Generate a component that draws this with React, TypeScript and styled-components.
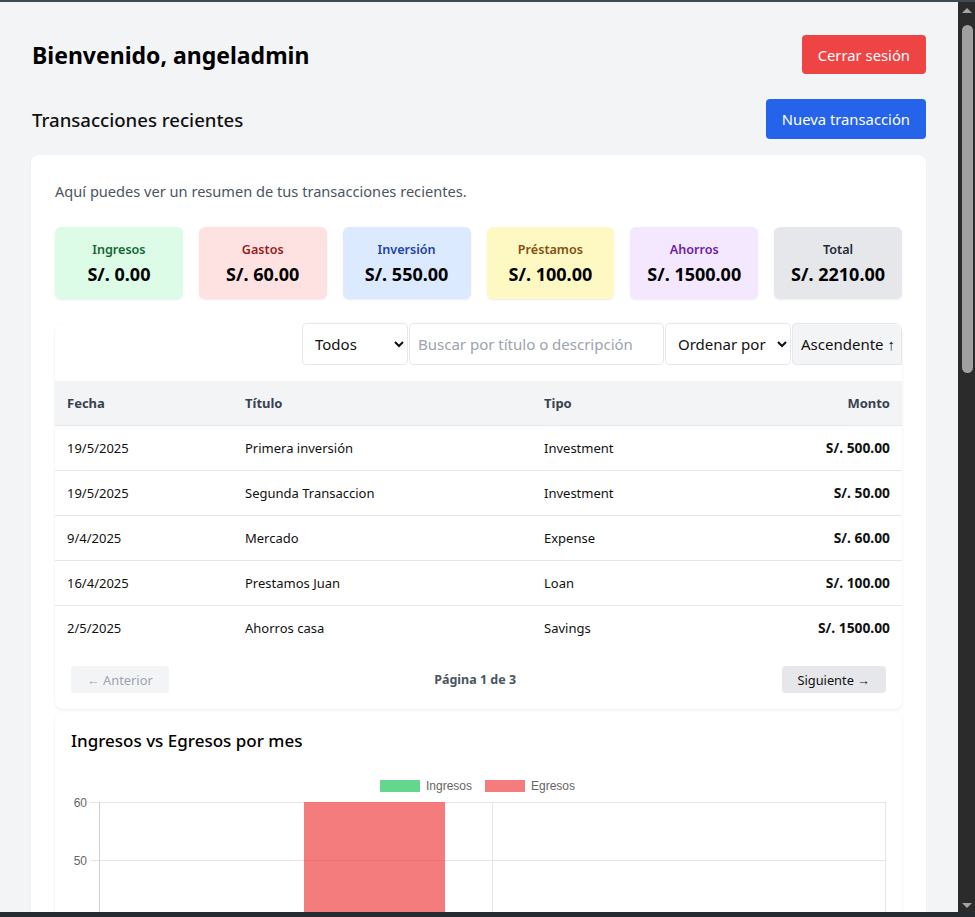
import React from 'react';
import styled, { createGlobalStyle } from 'styled-components';

const GlobalStyle = createGlobalStyle`
  body {
    margin: 0;
    background: #f3f4f6;
    font-family: "Noto Sans", "Open Sans", sans-serif;
    color: #111827;
  }
  * {
    box-sizing: border-box;
  }
`;

// window frame: the page viewport plus the browser's dark scrollbar
const Frame = styled.div`
  display: flex;
  flex-direction: column;
  height: 100vh;
  border-top: 2px solid #3c4a55;
  border-bottom: 5px solid #262a31;
`;

const Viewport = styled.div`
  display: flex;
  flex: 1;
  min-height: 0;
`;

const Main = styled.main`
  flex: 1;
  min-width: 0;
  overflow: hidden;
`;

const ScrollBar = styled.div`
  display: flex;
  flex-direction: column;
  align-items: center;
  width: 17px;
  background: #2b2b2b;
  padding: 6px 0 4px;
`;

const Arrow = styled.div<{ $down?: boolean }>`
  width: 0;
  height: 0;
  border-left: 5px solid transparent;
  border-right: 5px solid transparent;
  ${props =>
    props.$down
      ? 'border-top: 5px solid #a3a3a3; margin-top: auto;'
      : 'border-bottom: 5px solid #a3a3a3;'}
`;

const Thumb = styled.div`
  width: 11px;
  height: 348px;
  margin: 12px 0 0 2px;
  border-radius: 6px;
  background: #a0a0a0;
`;

const Page = styled.div`
  padding: 33px 32px 32px 31px;
`;

const HeaderRow = styled.div<{ $gap: number }>`
  display: flex;
  justify-content: space-between;
  align-items: center;
  margin-bottom: ${props => props.$gap}px;
  padding-left: 1px;
`;

const Title = styled.h1`
  margin: 0;
  font-size: 23px;
  font-weight: 700;
  color: #000;
`;

const Subtitle = styled.h2`
  margin: 0;
  font-size: 18.6px;
  font-weight: 500;
  color: #111;
`;

const ActionButton = styled.button<{ $color: string; $h: number }>`
  height: ${props => props.$h}px;
  padding: 0 16px;
  border: none;
  border-radius: 4px;
  background: ${props => props.$color};
  color: #fff;
  font-family: inherit;
  font-size: 14.8px;
  cursor: pointer;
`;

const Card = styled.div`
  background: #fff;
  border-radius: 8px;
  padding: 24px;
  box-shadow: 0 1px 2px rgba(0, 0, 0, 0.05);
`;

const Description = styled.p`
  margin: 0 0 24px;
  font-size: 14.6px;
  line-height: 24px;
  color: #4b5563;
`;

const SummaryGrid = styled.div`
  display: grid;
  grid-template-columns: repeat(6, 1fr);
  gap: 16px;
  margin-bottom: 24px;
`;

const SummaryBox = styled.div<{ $bg: string }>`
  background: ${props => props.$bg};
  border-radius: 6px;
  padding: 13px 8px 11px;
  text-align: center;
  box-shadow: 0 1px 2px rgba(0, 0, 0, 0.08);
`;

const SummaryLabel = styled.div<{ $color: string }>`
  font-size: 12.6px;
  line-height: 20px;
  font-weight: 600;
  color: ${props => props.$color};
`;

const SummaryValue = styled.div`
  font-size: 18px;
  line-height: 28px;
  font-weight: 700;
  color: #000;
`;

const TableCard = styled.div`
  background: #fff;
  border-radius: 8px;
  box-shadow: 0 1px 3px rgba(0, 0, 0, 0.08);
  overflow: hidden;
`;

const FilterRow = styled.div`
  display: flex;
  justify-content: flex-end;
  height: 42px;
  margin-bottom: 16px;
`;

const FilterSelect = styled.select<{ $w: number }>`
  width: ${props => props.$w}px;
  height: 42px;
  padding: 0 8px;
  border: 1px solid #e5e7eb;
  border-radius: 4px;
  background: #fff;
  font-family: inherit;
  font-size: 15px;
  color: #111;
`;

const SearchInput = styled.input`
  width: 255px;
  height: 42px;
  margin: 0 1px;
  padding: 0 8px;
  border: 1px solid #e5e7eb;
  border-radius: 4px;
  font-family: inherit;
  font-size: 15px;
  &::placeholder {
    color: #9ca3af;
  }
`;

const SortButton = styled.button`
  width: 110px;
  height: 42px;
  margin-left: 1px;
  padding: 0 8px;
  border: 1px solid #e5e7eb;
  border-radius: 4px 0 0 4px;
  background: #f3f4f6;
  font-family: inherit;
  font-size: 15px;
  color: #111;
  white-space: nowrap;
  overflow: hidden;
  text-align: left;
`;

const Table = styled.table`
  width: 100%;
  border-collapse: collapse;
  font-size: 13px;
`;

const Th = styled.th<{ $right?: boolean; $w?: number }>`
  height: 44px;
  padding: 0 12px;
  background: #f3f4f6;
  text-align: ${props => (props.$right ? 'right' : 'left')};
  width: ${props => (props.$w ? `${props.$w}px` : 'auto')};
  font-weight: 700;
  color: #374151;
`;

const Td = styled.td<{ $right?: boolean; $bold?: boolean }>`
  height: 45px;
  padding: 0 12px;
  border-top: 1px solid #e5e7eb;
  text-align: ${props => (props.$right ? 'right' : 'left')};
  font-weight: ${props => (props.$bold ? 700 : 400)};
  font-size: ${props => (props.$bold ? 13.8 : 13)}px;
  color: #111;
`;

const Pagination = styled.div`
  display: flex;
  justify-content: space-between;
  align-items: center;
  padding: 16px;
`;

const PageButton = styled.button<{ $disabled?: boolean }>`
  height: 27px;
  padding: 0 16px;
  border: none;
  border-radius: 4px;
  background: ${props => (props.$disabled ? '#f3f4f6' : '#e5e7eb')};
  color: ${props => (props.$disabled ? '#9ca3af' : '#111')};
  font-family: inherit;
  font-size: 12.8px;
`;

const PageInfo = styled.span`
  font-size: 12.5px;
  font-weight: 700;
  color: #4b5563;
`;

const ChartCard = styled.div`
  margin-top: 3px;
  background: #fff;
  border-radius: 8px;
  box-shadow: 0 1px 3px rgba(0, 0, 0, 0.08);
  padding: 16px;
`;

const ChartTitle = styled.h3`
  margin: 0 0 13px;
  font-size: 17px;
  line-height: 26px;
  font-weight: 500;
  color: #000;
`;

const ChartSvg = styled.svg`
  display: block;
  width: 100%;
  height: 420px;
  font-family: "Liberation Sans", Arial, sans-serif;
`;

const summary = [
  { label: 'Ingresos', value: 'S/. 0.00', bg: '#dcfce7', color: '#166534' },
  { label: 'Gastos', value: 'S/. 60.00', bg: '#fee2e2', color: '#991b1b' },
  { label: 'Inversión', value: 'S/. 550.00', bg: '#dbeafe', color: '#1e40af' },
  { label: 'Préstamos', value: 'S/. 100.00', bg: '#fef9c3', color: '#854d0e' },
  { label: 'Ahorros', value: 'S/. 1500.00', bg: '#f3e8ff', color: '#6b21a8' },
  { label: 'Total', value: 'S/. 2210.00', bg: '#e5e7eb', color: '#1f2937' },
];

const rows = [
  { date: '19/5/2025', title: 'Primera inversión', type: 'Investment', amount: 'S/. 500.00' },
  { date: '19/5/2025', title: 'Segunda Transaccion', type: 'Investment', amount: 'S/. 50.00' },
  { date: '9/4/2025', title: 'Mercado', type: 'Expense', amount: 'S/. 60.00' },
  { date: '16/4/2025', title: 'Prestamos Juan', type: 'Loan', amount: 'S/. 100.00' },
  { date: '2/5/2025', title: 'Ahorros casa', type: 'Savings', amount: 'S/. 1500.00' },
];

const ticks = [60, 50, 40, 30, 20, 10, 0];

const IncomeChart: React.FC = () => (
  <ChartSvg viewBox="0 0 815 420" preserveAspectRatio="xMinYMin meet">
    <rect x="309" y="13" width="40" height="12" fill="rgba(34,197,94,0.7)" />
    <text x="355" y="23" fontSize="12" fill="#666">Ingresos</text>
    <rect x="414" y="13" width="40" height="12" fill="rgba(239,68,68,0.7)" />
    <text x="460" y="23" fontSize="12" fill="#666">Egresos</text>
    {ticks.map((t, i) => (
      <g key={t}>
        <line x1="19" x2="814" y1={35.5 + i * 58} y2={35.5 + i * 58} stroke="#e5e5e5" />
        <text x="16" y={39.5 + i * 58} fontSize="12" fill="#666" textAnchor="end">{t}</text>
      </g>
    ))}
    <line x1="28.5" x2="28.5" y1="35" y2="391" stroke="#cfcfcf" />
    <line x1="421.5" x2="421.5" y1="35" y2="391" stroke="#e5e5e5" />
    <line x1="814.5" x2="814.5" y1="35" y2="391" stroke="#e5e5e5" />
    <rect x="233" y="35" width="141" height="348" fill="rgba(239,68,68,0.7)" />
    <text x="225" y="403" fontSize="12" fill="#666" textAnchor="middle">2025-04</text>
    <text x="618" y="403" fontSize="12" fill="#666" textAnchor="middle">2025-05</text>
  </ChartSvg>
);

const App: React.FC = () => {
  return (
    <>
      <GlobalStyle />
      <Frame>
        <Viewport>
          <Main>
            <Page>
              <HeaderRow $gap={25}>
                <Title>Bienvenido, angeladmin</Title>
                <ActionButton $color="#ef4444" $h={39}>Cerrar sesión</ActionButton>
              </HeaderRow>
              <HeaderRow $gap={16}>
                <Subtitle>Transacciones recientes</Subtitle>
                <ActionButton $color="#2563eb" $h={40}>Nueva transacción</ActionButton>
              </HeaderRow>
              <Card>
                <Description>Aquí puedes ver un resumen de tus transacciones recientes.</Description>
                <SummaryGrid>
                  {summary.map(s => (
                    <SummaryBox key={s.label} $bg={s.bg}>
                      <SummaryLabel $color={s.color}>{s.label}</SummaryLabel>
                      <SummaryValue>{s.value}</SummaryValue>
                    </SummaryBox>
                  ))}
                </SummaryGrid>
                <TableCard>
                  <FilterRow>
                    <FilterSelect $w={106} defaultValue="all">
                      <option value="all">Todos</option>
                    </FilterSelect>
                    <SearchInput placeholder="Buscar por título o descripción" />
                    <FilterSelect $w={126} defaultValue="">
                      <option value="">Ordenar por</option>
                    </FilterSelect>
                    <SortButton>Ascendente ↑</SortButton>
                  </FilterRow>
                  <Table>
                    <thead>
                      <tr>
                        <Th $w={178}>Fecha</Th>
                        <Th $w={299}>Título</Th>
                        <Th>Tipo</Th>
                        <Th $right>Monto</Th>
                      </tr>
                    </thead>
                    <tbody>
                      {rows.map((r, i) => (
                        <tr key={i}>
                          <Td>{r.date}</Td>
                          <Td>{r.title}</Td>
                          <Td>{r.type}</Td>
                          <Td $right $bold>{r.amount}</Td>
                        </tr>
                      ))}
                    </tbody>
                  </Table>
                  <Pagination>
                    <PageButton $disabled>← Anterior</PageButton>
                    <PageInfo>Página 1 de 3</PageInfo>
                    <PageButton>Siguiente →</PageButton>
                  </Pagination>
                </TableCard>
                <ChartCard>
                  <ChartTitle>Ingresos vs Egresos por mes</ChartTitle>
                  <IncomeChart />
                </ChartCard>
              </Card>
            </Page>
          </Main>
          <ScrollBar>
            <Arrow />
            <Thumb />
            <Arrow $down />
          </ScrollBar>
        </Viewport>
      </Frame>
    </>
  );
};

export default App;
